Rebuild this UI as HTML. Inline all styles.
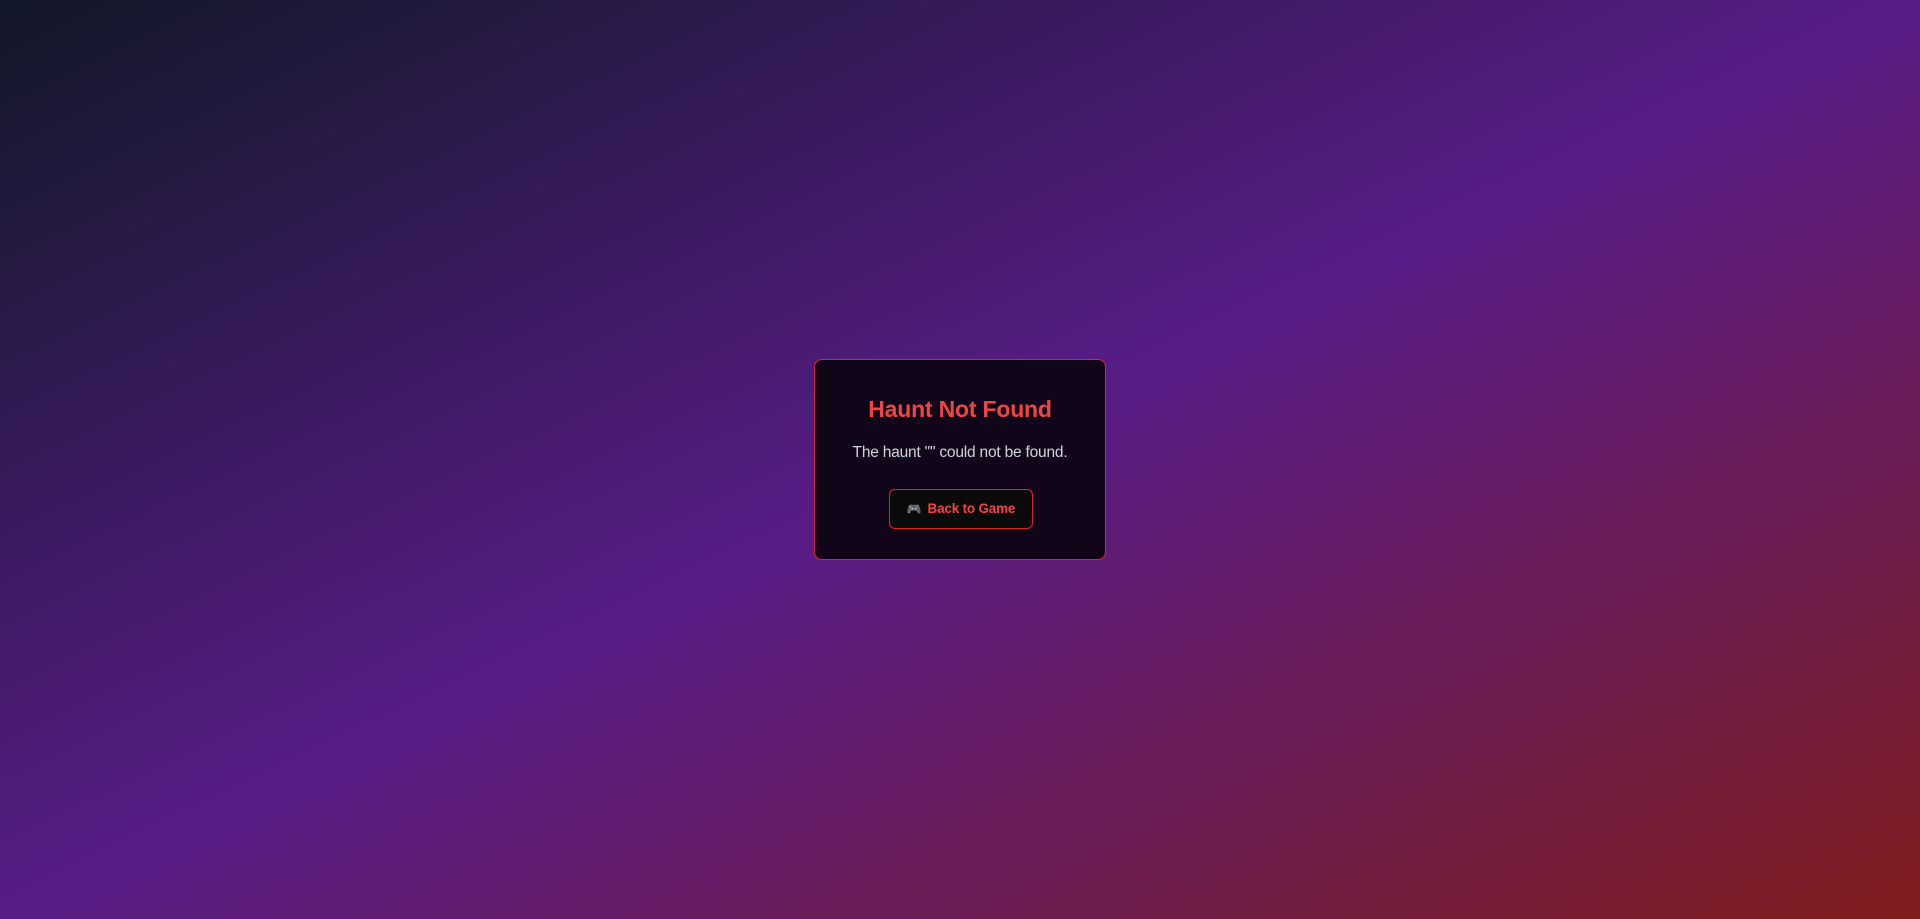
<!DOCTYPE html>
<html><head><style>
html,body{margin:0;width:1920px;height:919px;overflow:hidden}
body{background:linear-gradient(to bottom right,#111827,#581c87,#7f1d1d);font-family:"Liberation Sans",sans-serif;position:relative}
.card{position:absolute;left:814px;top:359px;width:290px;height:199px;border:1px solid #dc2626;border-radius:8px;background:rgba(10,3,14,0.9);box-sizing:content-box;text-align:center}
h1{margin:0;position:absolute;top:34px;left:0;right:0;font-size:23px;font-weight:bold;color:#ef4444;line-height:30px;letter-spacing:-0.2px}
p{margin:0;position:absolute;top:82px;left:0;right:0;font-size:15.5px;color:#d1d5db;line-height:22px;letter-spacing:-0.2px}
.btn{position:absolute;left:74px;top:129px;width:142px;height:38px;border:1px solid #dc2626;border-radius:6px;background:#0a0a0a;color:#ef4444;font-size:13.5px;font-weight:bold;line-height:38px;letter-spacing:-0.2px}
.btn span{color:#555;font-size:12px;margin-right:6px}
</style></head><body>
<div class="card">
<h1>Haunt Not Found</h1>
<p>The haunt "" could not be found.</p>
<div class="btn"><span>🎮</span>Back to Game</div>
</div>
</body></html>
